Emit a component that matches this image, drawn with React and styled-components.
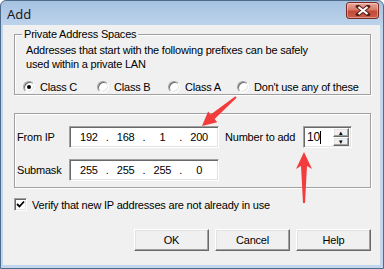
import React from 'react'
import styled, { createGlobalStyle } from 'styled-components'

const GlobalStyle = createGlobalStyle`
  html, body {
    margin: 0;
    padding: 0;
  }
  body {
    width: 384px;
    height: 269px;
    overflow: hidden;
    font-family: "Liberation Sans", Arial, sans-serif;
    font-size: 11px;
    letter-spacing: -0.2px;
    color: #000;
  }
`

const App = () => {
  return (
    <>
      <GlobalStyle />
      <Window>
        <TitleBar>
          <Title>Add</Title>
          <CloseButton>
            <svg width="16" height="11" viewBox="0 0 16 11">
              <path d="M3 1.5 L13 9.5 M13 1.5 L3 9.5" stroke="#5a1f18" strokeWidth="4" strokeLinecap="square" />
              <path d="M3.5 2 L12.5 9 M12.5 2 L3.5 9" stroke="#fff" strokeWidth="2.2" />
            </svg>
          </CloseButton>
        </TitleBar>
        <Body>
          <Group>
            <Legend>Private Address Spaces</Legend>
            <Desc>Addresses that start with the following prefixes can be safely</Desc>
            <Desc>used within a private LAN</Desc>
            <RadioRow>
              <RadioItem $width={74}><RadioDot $checked />Class C</RadioItem>
              <RadioItem $width={71}><RadioDot />Class B</RadioItem>
              <RadioItem $width={69}><RadioDot />Class A</RadioItem>
              <RadioItem><RadioDot />Don't use any of these</RadioItem>
            </RadioRow>
          </Group>

          <PlainGroup>
            <FieldRow>
              <FieldLabel>From IP</FieldLabel>
              <IpBox>
                <Octet>192</Octet><Dot>.</Dot>
                <Octet>168</Octet><Dot>.</Dot>
                <Octet>1</Octet><Dot>.</Dot>
                <Octet>200</Octet>
              </IpBox>
              <NumLabel>Number to add</NumLabel>
              <SpinBox>
                <SpinText>10<Caret /></SpinText>
                <SpinButtons>
                  <SpinBtn>▴</SpinBtn>
                  <SpinBtn>▾</SpinBtn>
                </SpinButtons>
              </SpinBox>
            </FieldRow>
            <FieldRow>
              <FieldLabel>Submask</FieldLabel>
              <IpBox>
                <Octet>255</Octet><Dot>.</Dot>
                <Octet>255</Octet><Dot>.</Dot>
                <Octet>255</Octet><Dot>.</Dot>
                <Octet>0</Octet>
              </IpBox>
            </FieldRow>
          </PlainGroup>

          <CheckRow>
            <CheckBox>
              <svg width="9" height="9" viewBox="0 0 9 9">
                <path d="M1 4 L3.5 6.5 L8 1.5" stroke="#000" strokeWidth="1.8" fill="none" />
              </svg>
            </CheckBox>
            Verify that new IP addresses are not already in use
          </CheckRow>

          <ButtonRow>
            <Button>OK</Button>
            <Button>Cancel</Button>
            <Button>Help</Button>
          </ButtonRow>
        </Body>

        <Annotations width="384" height="269" viewBox="0 0 384 269">
          <polygon
            points="202,126 217.2,122.2 214.6,118.9 236.6,97.8 235.4,96.2 210.7,114.6 208.1,111.6"
            fill="#f23b3b"
          />
          <polygon
            points="304,152 312,169 307,166 305,203 303,203 301,166 296,169"
            fill="#f23b3b"
          />
        </Annotations>
      </Window>
    </>
  )
}

const Window = styled.div`
  position: relative;
  width: 384px;
  height: 269px;
  box-sizing: border-box;
  display: flex;
  flex-direction: column;
  background: linear-gradient(#a6c2e2, #c2d7ed 30px, #c2d7ed);
  border: 1px solid #4f6b8c;
  border-radius: 6px 6px 0 0;
`

const TitleBar = styled.div`
  height: 24px;
  display: flex;
  align-items: center;
  justify-content: space-between;
  padding: 0 4px 0 6px;
`

const Title = styled.div`
  font-family: "Noto Sans", "Open Sans", sans-serif;
  font-size: 13px;
  letter-spacing: 0;
  color: #1a1a1a;
  margin-top: 1px;
`

const CloseButton = styled.div`
  width: 33px;
  height: 17px;
  box-sizing: border-box;
  margin-top: -6px;
  display: flex;
  align-items: center;
  justify-content: center;
  border: 1px solid #7a2a22;
  border-radius: 3px;
  background: linear-gradient(#e9a99b, #d67a69 45%, #c34a35 55%, #c8604c);
  box-shadow: inset 0 0 0 1px rgba(255, 255, 255, 0.35);
`

const Body = styled.div`
  flex: 1;
  margin: 0 3px 3px 2px;
  background: #f0f0f0;
  display: flex;
  flex-direction: column;
  padding: 0 9px 0 11px;
`

const Group = styled.fieldset`
  margin: 2px 0 0;
  padding: 2px 10px 0 11px;
  min-width: 0;
  border: 1px solid #a0a0a0;
  box-shadow: inset 1px 1px 0 #fff, 1px 1px 0 #fff;
`

const Legend = styled.legend`
  padding: 0 2px;
  margin-left: -4px;
  line-height: 14px;
  background: #f0f0f0;
`

const Desc = styled.p`
  margin: 0;
  line-height: 14px;
`

const RadioRow = styled.div`
  display: flex;
  align-items: center;
  height: 14px;
  margin: 9px 0 0 -3px;
`

const RadioItem = styled.div`
  display: flex;
  align-items: center;
  gap: 5px;
  width: ${p => (p.$width ? `${p.$width}px` : 'auto')};
  white-space: nowrap;
`

const RadioDot = styled.span`
  position: relative;
  width: 12px;
  height: 12px;
  box-sizing: border-box;
  border-radius: 50%;
  background: #fff;
  border: 1px solid;
  border-color: #a0a0a0 #fff #fff #a0a0a0;
  box-shadow: inset 1px 1px 0 #696969, inset -1px -1px 0 #e3e3e3;
  &::after {
    content: '';
    display: ${p => (p.$checked ? 'block' : 'none')};
    position: absolute;
    left: 3px;
    top: 3px;
    width: 4px;
    height: 4px;
    border-radius: 50%;
    background: #000;
  }
`

const PlainGroup = styled.div`
  margin-top: 18px;
  padding: 12px 0 6px 2px;
  border: 1px solid #a0a0a0;
  box-shadow: inset 1px 1px 0 #fff, 1px 1px 0 #fff;
  display: flex;
  flex-direction: column;
  gap: 11px;
`

const FieldRow = styled.div`
  display: flex;
  align-items: center;
  height: 22px;
`

const FieldLabel = styled.div`
  width: 52px;
`

const sunken = `
  box-sizing: border-box;
  background: #fff;
  border: 1px solid;
  border-color: #a0a0a0 #fff #fff #a0a0a0;
  box-shadow: inset 1px 1px 0 #696969, inset -1px -1px 0 #e3e3e3;
`

const IpBox = styled.div`
  ${sunken}
  width: 150px;
  height: 22px;
  display: grid;
  grid-template-columns: 1fr 3px 1fr 3px 1fr 3px 1fr;
  align-items: center;
  padding: 0 2px;
`

const Octet = styled.span`
  text-align: center;
`

const Dot = styled.span`
  text-align: center;
`

const NumLabel = styled.div`
  margin-left: 6px;
  width: 78px;
`

const SpinBox = styled.div`
  ${sunken}
  width: 49px;
  height: 22px;
  display: flex;
  align-items: center;
  justify-content: space-between;
  padding: 2px 2px 2px 3px;
`

const SpinText = styled.div`
  display: flex;
  align-items: center;
  font-size: 12px;
`

const Caret = styled.span`
  width: 1px;
  height: 13px;
  background: #000;
`

const SpinButtons = styled.div`
  display: flex;
  flex-direction: column;
  height: 18px;
`

const raised = `
  box-sizing: border-box;
  background: #f0f0f0;
  border: 1px solid;
  border-color: #fff #696969 #696969 #fff;
  box-shadow: inset -1px -1px 0 #a0a0a0, inset 1px 1px 0 #e3e3e3;
`

const SpinBtn = styled.div`
  ${raised}
  width: 16px;
  height: 9px;
  font-size: 7px;
  line-height: 7px;
  text-align: center;
`

const CheckRow = styled.div`
  display: flex;
  align-items: center;
  gap: 5px;
  margin-top: 10px;
  height: 13px;
`

const CheckBox = styled.span`
  ${sunken}
  width: 13px;
  height: 13px;
  display: flex;
  align-items: center;
  justify-content: center;
`

const ButtonRow = styled.div`
  display: flex;
  justify-content: flex-end;
  gap: 6px;
  margin-top: 18px;
`

const Button = styled.div`
  ${raised}
  width: 75px;
  height: 22px;
  display: flex;
  align-items: center;
  justify-content: center;
`

const Annotations = styled.svg`
  position: absolute;
  left: -1px;
  top: -1px;
  pointer-events: none;
`

export default App
